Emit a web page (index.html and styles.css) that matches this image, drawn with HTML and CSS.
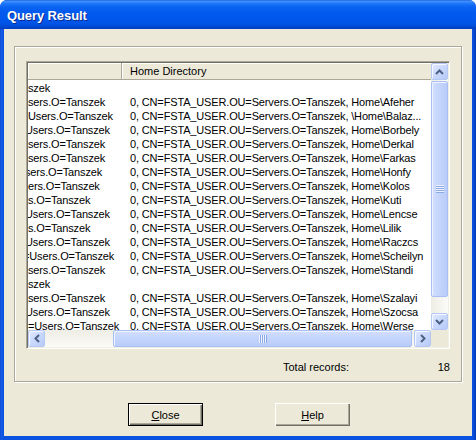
FILE: index.html
```html
<!DOCTYPE html>
<html>
<head>
<meta charset="utf-8">
<title>Query Result</title>
<link rel="stylesheet" href="styles.css">
</head>
<body>
<div class="window">
  <div class="titlebar"><span class="title">Query Result</span></div>
  <div class="client">
    <div class="group">
      <div class="listview">
        <div class="viewport">
          <div class="header">
            <div class="hcell h1"></div>
            <div class="hcell h2">Home Directory</div>
          </div>
          <div class="rows">
            <div class="row"><div class="c1"><span>szek</span></div><div class="c2"></div></div>
            <div class="row"><div class="c1"><span>sers.O=Tanszek</span></div><div class="c2">0, CN=FSTA_USER.OU=Servers.O=Tanszek, Home\Afeher</div></div>
            <div class="row"><div class="c1"><span>Users.O=Tanszek</span></div><div class="c2">0, CN=FSTA_USER.OU=Servers.O=Tanszek, \Home\Balaz...</div></div>
            <div class="row"><div class="c1"><span class="cut3">Users.O=Tanszek</span></div><div class="c2">0, CN=FSTA_USER.OU=Servers.O=Tanszek, Home\Borbely</div></div>
            <div class="row"><div class="c1"><span>sers.O=Tanszek</span></div><div class="c2">0, CN=FSTA_USER.OU=Servers.O=Tanszek, Home\Derkal</div></div>
            <div class="row"><div class="c1"><span>sers.O=Tanszek</span></div><div class="c2">0, CN=FSTA_USER.OU=Servers.O=Tanszek, Home\Farkas</div></div>
            <div class="row"><div class="c1"><span class="cut3">sers.O=Tanszek</span></div><div class="c2">0, CN=FSTA_USER.OU=Servers.O=Tanszek, Home\Honfy</div></div>
            <div class="row"><div class="c1"><span>ers.O=Tanszek</span></div><div class="c2">0, CN=FSTA_USER.OU=Servers.O=Tanszek, Home\Kolos</div></div>
            <div class="row"><div class="c1"><span>s.O=Tanszek</span></div><div class="c2">0, CN=FSTA_USER.OU=Servers.O=Tanszek, Home\Kuti</div></div>
            <div class="row"><div class="c1"><span class="cut3">Users.O=Tanszek</span></div><div class="c2">0, CN=FSTA_USER.OU=Servers.O=Tanszek, Home\Lencse</div></div>
            <div class="row"><div class="c1"><span>s.O=Tanszek</span></div><div class="c2">0, CN=FSTA_USER.OU=Servers.O=Tanszek, Home\Lilik</div></div>
            <div class="row"><div class="c1"><span class="cut3">Users.O=Tanszek</span></div><div class="c2">0, CN=FSTA_USER.OU=Servers.O=Tanszek, Home\Raczcs</div></div>
            <div class="row"><div class="c1"><span class="cut5">=Users.O=Tanszek</span></div><div class="c2">0, CN=FSTA_USER.OU=Servers.O=Tanszek, Home\Scheilyn</div></div>
            <div class="row"><div class="c1"><span>sers.O=Tanszek</span></div><div class="c2">0, CN=FSTA_USER.OU=Servers.O=Tanszek, Home\Standi</div></div>
            <div class="row"><div class="c1"><span>szek</span></div><div class="c2"></div></div>
            <div class="row"><div class="c1"><span>sers.O=Tanszek</span></div><div class="c2">0, CN=FSTA_USER.OU=Servers.O=Tanszek, Home\Szalayi</div></div>
            <div class="row"><div class="c1"><span class="cut3">Users.O=Tanszek</span></div><div class="c2">0, CN=FSTA_USER.OU=Servers.O=Tanszek, Home\Szocsa</div></div>
            <div class="row"><div class="c1"><span>=Users.O=Tanszek</span></div><div class="c2">0, CN=FSTA_USER.OU=Servers.O=Tanszek, Home\Werse</div></div>
          </div>
        </div>
        <div class="vscroll">
          <div class="sbtn"><svg width="9" height="6" viewBox="0 0 9 6"><polyline points="1,5 4.5,1.5 8,5" fill="none" stroke="#4D6185" stroke-width="2"/></svg></div>
          <div class="vthumb"><div class="grip-v"></div></div>
          <div class="vtrack"></div>
          <div class="sbtn"><svg width="9" height="6" viewBox="0 0 9 6"><polyline points="1,1 4.5,4.5 8,1" fill="none" stroke="#4D6185" stroke-width="2"/></svg></div>
        </div>
        <div class="hscroll">
          <div class="sbtn"><svg width="6" height="9" viewBox="0 0 6 9"><polyline points="5,1 1.5,4.5 5,8" fill="none" stroke="#4D6185" stroke-width="2"/></svg></div>
          <div class="htrack-a"></div>
          <div class="hthumb"><div class="grip-h"></div></div>
          <div class="htrack-b"></div>
          <div class="sbtn"><svg width="6" height="9" viewBox="0 0 6 9"><polyline points="1,1 4.5,4.5 1,8" fill="none" stroke="#4D6185" stroke-width="2"/></svg></div>
        </div>
        <div class="corner"></div>
      </div>
      <div class="total">
        <span class="total-label">Total records:</span>
        <span class="total-value">18</span>
      </div>
    </div>
    <div class="buttons">
      <button class="btn default"><u>C</u>lose</button>
      <button class="btn"><u>H</u>elp</button>
    </div>
  </div>
</div>
</body>
</html>
```

FILE: styles.css
```css
html, body {
  margin: 0;
  padding: 0;
  background: #ffffff;
}
body {
  font-family: "Liberation Sans", Arial, sans-serif;
  font-size: 11px;
  color: #000;
}
.window {
  width: 476px;
  height: 440px;
  display: flex;
  flex-direction: column;
  background: linear-gradient(to right, #0841C8 0, #1A5FEA 1px, #0A52E0 3px, #0A52E0 472px, #0A4BD6 474px, #0035B0 476px);
  border-radius: 7px 7px 0 0;
  overflow: hidden;
}
.titlebar {
  height: 29px;
  flex: none;
  box-sizing: border-box;
  padding-left: 7px;
  display: flex;
  align-items: center;
  background: linear-gradient(to bottom,
    #0A4FE0 0, #4A97FA 1px, #3488FB 2px, #1A74F8 4px, #0A64F2 7px,
    #035BEE 12px, #0058EC 18px, #0054E6 23px, #0050DE 25px, #0047CF 27px, #003DBE 29px);
}
.title {
  color: #fff;
  font-weight: bold;
  font-size: 13px;
  letter-spacing: -0.1px;
  text-shadow: 1px 1px 0 #0B2A8F;
  padding-top: 1px;
}
.client {
  flex: 1;
  margin: 0 4px 4px 4px;
  background: #ECE9D8;
  display: flex;
  flex-direction: column;
}
.group {
  margin: 17px 0 0 10px;
  width: 448px;
  height: 336px;
  box-sizing: border-box;
  border: 1px solid #ACA899;
  box-shadow: inset 1px 1px 0 #fff, 1px 1px 0 #fff;
  padding: 14px 0 0 11px;
}
.listview {
  width: 424px;
  height: 288px;
  box-sizing: border-box;
  border: 1px solid;
  border-color: #ACA899 #fff #fff #ACA899;
  padding: 1px;
  box-shadow: inset 1px 1px 0 #716F64, inset -1px -1px 0 #F1EFE2;
  display: grid;
  grid-template-columns: 403px 17px;
  grid-template-rows: 267px 17px;
  background: #fff;
}
.viewport {
  overflow: hidden;
  background: #fff;
}
.header {
  display: flex;
  height: 17px;
}
.hcell {
  box-sizing: border-box;
  height: 17px;
  background: #ECE9D8;
  border-right: 1px solid #ACA899;
  border-bottom: 1px solid #ACA899;
  box-shadow: inset 1px 1px 0 #fff;
  line-height: 16px;
  white-space: nowrap;
}
.h1 { width: 94px; }
.h2 { flex: 1; padding-left: 8px; border-right: none; }
.rows {
  padding-top: 1px;
  letter-spacing: -0.15px;
}
.row {
  display: flex;
  height: 14px;
  line-height: 14px;
  white-space: nowrap;
}
.c1 {
  width: 94px;
  flex: none;
  overflow: hidden;
}
.c1 span { display: inline-block; }
.cut3 { margin-left: -3px; }
.cut5 { margin-left: -5px; }
.c2 {
  flex: 1;
  padding-left: 8px;
  overflow: hidden;
}
.vscroll {
  display: flex;
  flex-direction: column;
  background: linear-gradient(to right, #EEEDE5, #FBFBF8);
}
.sbtn {
  width: 17px;
  height: 17px;
  flex: none;
  box-sizing: border-box;
  border: 1px solid #B4C8F3;
  border-radius: 2px;
  background: linear-gradient(135deg, #E2EAFE 0, #C9D8FC 50%, #B6CAF7 100%);
  box-shadow: inset 1px 1px 0 #F4F7FF;
  display: flex;
  align-items: center;
  justify-content: center;
}
.vthumb {
  height: 216px;
  margin-top: 1px;
  flex: none;
  box-sizing: border-box;
  border: 1px solid #A9BFF3;
  border-radius: 2px;
  background: linear-gradient(to right, #D3DFFD 0, #C6D6FC 40%, #B9CCF9 100%);
  box-shadow: inset 1px 1px 0 #EEF3FF;
  display: flex;
  align-items: center;
  justify-content: center;
}
.grip-v {
  width: 8px;
  height: 8px;
  background: repeating-linear-gradient(to bottom, #EEF3FE 0 1px, #8DA8E6 1px 2px);
}
.vtrack { flex: 1; }
.hscroll {
  display: flex;
  background: linear-gradient(to bottom, #EEEDE5, #FBFBF8);
}
.htrack-a { width: 68px; flex: none; }
.htrack-b { flex: 1; }
.hthumb {
  width: 299px;
  flex: none;
  box-sizing: border-box;
  border: 1px solid #A9BFF3;
  border-radius: 2px;
  background: linear-gradient(to bottom, #D3DFFD 0, #C6D6FC 40%, #B9CCF9 100%);
  box-shadow: inset 1px 1px 0 #EEF3FF;
  display: flex;
  align-items: center;
  justify-content: center;
}
.grip-h {
  width: 8px;
  height: 8px;
  background: repeating-linear-gradient(to right, #EEF3FE 0 1px, #8DA8E6 1px 2px);
}
.corner {
  background: #ECE9D8;
}
.total {
  width: 424px;
  margin-top: 11px;
  height: 14px;
  line-height: 14px;
  display: flex;
  justify-content: space-between;
}
.total-label { padding-left: 257px; }
.buttons {
  margin-top: 21px;
  padding-left: 124px;
  display: flex;
  gap: 72px;
}
.btn {
  width: 75px;
  height: 23px;
  box-sizing: border-box;
  margin: 0;
  padding: 0;
  border: none;
  background: #ECE9D8;
  font-family: "Liberation Sans", Arial, sans-serif;
  font-size: 11px;
  color: #000;
  box-shadow: inset 1px 1px 0 #fff, inset -1px -1px 0 #716F64, inset -2px -2px 0 #ACA899;
}
.btn.default {
  border: 1px solid #000;
}
```
